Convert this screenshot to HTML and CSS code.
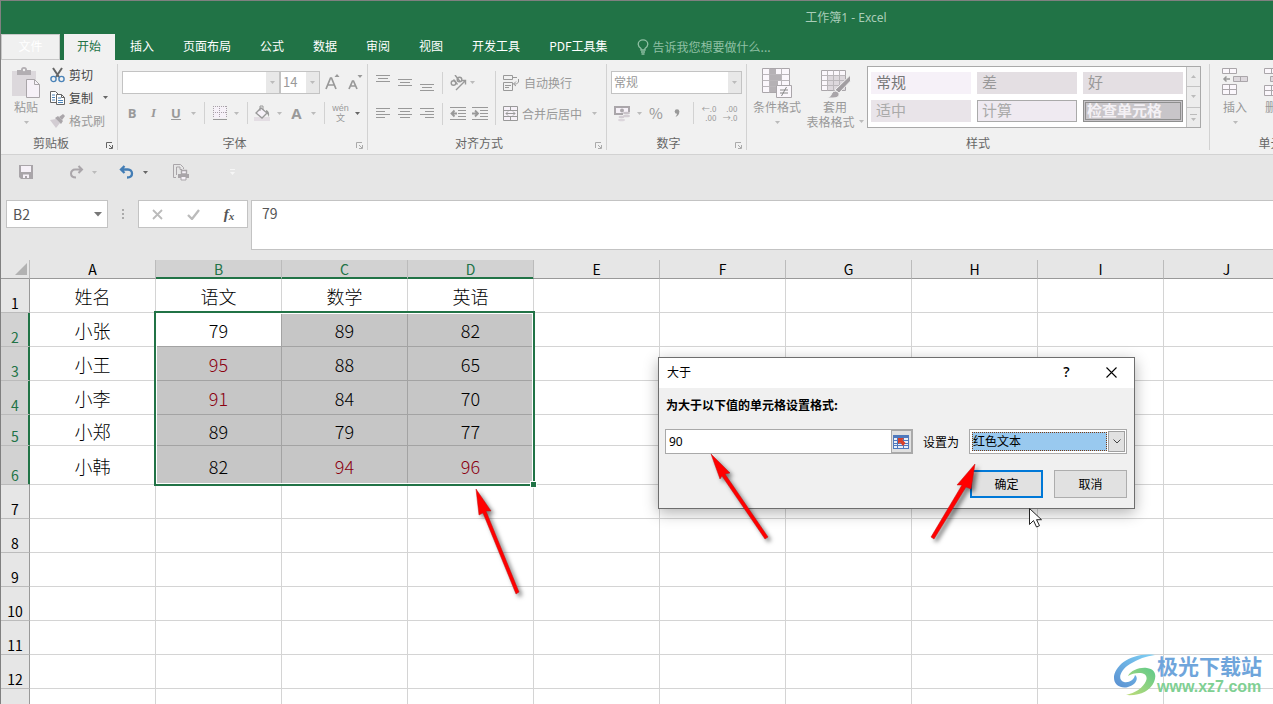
FILE: index.html
```html
<!DOCTYPE html>
<html lang="zh-CN">
<head>
<meta charset="utf-8">
<title>工作簿1 - Excel</title>
<link rel="stylesheet" href="styles.css">
</head>
<body>
<svg class="defs" width="0" height="0" aria-hidden="true">
  <symbol id="caret" viewBox="0 0 5 3"><path d="M0 0h5L2.500 3z" fill="currentColor"/></symbol>
  <symbol id="launch" viewBox="0 0 7 7"><path d="M.5 6V.5H6" fill="none" stroke="currentColor"/><path d="M3 3l3 3M6.500 3v3.500H3" fill="none" stroke="currentColor"/></symbol>
</svg>
<div class="app">
  <header class="title-bar"><span class="title">工作簿1 - Excel</span></header>

  <nav class="tabs">
    <button class="tab tab-file">文件</button>
    <button class="tab tab-active">开始</button>
    <button class="tab">插入</button>
    <button class="tab">页面布局</button>
    <button class="tab">公式</button>
    <button class="tab">数据</button>
    <button class="tab">审阅</button>
    <button class="tab">视图</button>
    <button class="tab">开发工具</button>
    <button class="tab">PDF工具集</button>
    <button class="tab tell-me"><svg width="12" height="16" viewBox="0 0 12 16" fill="none" stroke="currentColor" stroke-width="1.300"><path d="M4 11V9.500C2 8 1.200 7 1.200 5.200a4.800 4.300 0 0 1 9.600 0C10.800 7 10 8 8 9.500V11zM4 13h4M4.500 15h3"/></svg><span>告诉我您想要做什么...</span></button>
  </nav>

  <section class="ribbon">
    <div class="group clipboard">
      <div class="group-body">
        <button class="big">
          <svg width="30" height="32" viewBox="0 0 30 32"><path d="M1 4h24v25H1z" fill="#dcd8dc"/><path d="M6 3h4a3 3 0 0 1 6 0h4v5H6z" fill="#b2aeb2"/><circle cx="13" cy="3" r="1.200" fill="#f1f1f1"/><path d="M15.500 12.500h8l5 5v13h-13z" fill="#f6f1f8" stroke="#a9a5a9"/><path d="M23.500 12.500v5h5" fill="none" stroke="#a9a5a9"/></svg>
          <span>粘贴</span>
          <svg class="caret"><use href="#caret"/></svg>
        </button>
        <div class="small-list">
          <button class="small dark"><svg width="15" height="16" viewBox="0 0 15 16" fill="none"><path d="M3 1l6 9M12 1L6 10" stroke="#666" stroke-width="2"/><circle cx="3.500" cy="12" r="2.600" stroke="#4a83b8" stroke-width="1.400"/><circle cx="11.500" cy="12" r="2.600" stroke="#4a83b8" stroke-width="1.400"/></svg><span>剪切</span></button>
          <button class="small dark"><svg width="15" height="16" viewBox="0 0 15 16"><path d="M.5 1.500h5l3 3v8h-8z" fill="#fff" stroke="#666"/><path d="M6.500 4.500h5l3 3v7h-8z" fill="#fff" stroke="#666"/><path d="M2 5h3M2 7.500h3M2 10h3M8 8h3M8 10.500h5M8 12.500h5" stroke="#4a83b8"/><path d="M11.500 4.500v3h3" fill="none" stroke="#666"/></svg><span>复制</span><svg class="caret push"><use href="#caret"/></svg></button>
          <button class="small"><svg width="15" height="16" viewBox="0 0 15 16"><path d="M0 7l6-1 4 4-4 5z" fill="#d3cdd3"/><path d="M5 5l3-2 5 5-2 3z" fill="#aaa6aa"/><path d="M9 4l4-3 2 2-3 4z" fill="#aaa6aa"/></svg><span>格式刷</span></button>
        </div>
      </div>
      <footer class="group-label dark">剪贴板<svg class="launch"><use href="#launch"/></svg></footer>
    </div>

    <div class="group font">
      <div class="group-body rows">
        <div class="font-pick">
          <span class="combo"><select aria-label="字体"><option></option></select><span class="combo-arrow"><svg class="caret"><use href="#caret"/></svg></span></span>
          <span class="combo combo-size"><select aria-label="字号"><option>14</option></select><span class="combo-arrow"><svg class="caret"><use href="#caret"/></svg></span></span>
          <button class="tool" aria-label="增大字号"><svg width="15" height="16" viewBox="0 0 15 16" fill="none"><path d="M1 15L5.500 4h1L11 15M2.800 11h6.500" stroke="#999" stroke-width="1.700"/><path d="M9.500 3h5L12 0z" fill="#999"/></svg></button>
          <button class="tool" aria-label="减小字号"><svg width="15" height="16" viewBox="0 0 15 16" fill="none"><path d="M1 15l3.500-8h1L9 15M2.500 12h5" stroke="#999" stroke-width="1.700"/><path d="M9.500 1h5L12 4z" fill="#999"/></svg></button>
        </div>
        <div class="font-tools">
          <button class="tool bold">B</button><button class="tool italic">I</button><button class="tool underline">U</button>
          <svg class="caret"><use href="#caret"/></svg><i class="sep"></i>
          <button class="tool" aria-label="边框"><svg width="14" height="14" viewBox="0 0 14 14"><path d="M1 1h12v11H1z" fill="#f6f1f8"/><path d="M.5 0v12M6.500 0v12M13.500 0v12M0 .5h14M0 6.500h14" stroke="#a9a0a9" stroke-dasharray="1 1"/><path d="M0 13.500h14" stroke="#999"/></svg></button>
          <svg class="caret"><use href="#caret"/></svg><i class="sep"></i>
          <button class="tool" aria-label="填充颜色"><svg width="17" height="17" viewBox="0 0 17 17"><path d="M0 12h16v4H0z" fill="#e3dde3"/><path d="M7 3l6 5-5 5-6-5z" fill="#f6f1f8" stroke="#999" stroke-width="1.300"/><path d="M6 6V1h3v4" fill="none" stroke="#999"/><path d="M12 5q4 1 3 7-1-3-3-4z" fill="#999"/></svg></button>
          <svg class="caret"><use href="#caret"/></svg>
          <button class="tool bold big-a">A</button>
          <svg class="caret"><use href="#caret"/></svg><i class="sep"></i>
          <button class="tool pinyin"><span>wén</span><span>文</span></button>
          <svg class="caret dark"><use href="#caret"/></svg>
        </div>
      </div>
      <footer class="group-label">字体<svg class="launch"><use href="#launch"/></svg></footer>
    </div>

    <div class="group align">
      <div class="group-body align-tools">
        <button class="tool" aria-label="顶端对齐"><svg width="14" height="16" viewBox="0 0 14 16"><path d="M0 .5h14M2 3.500h10M0 6.500h14" stroke="#999"/></svg></button>
        <button class="tool" aria-label="垂直居中"><svg width="14" height="16" viewBox="0 0 14 16"><path d="M0 4.500h14M2 7.500h10M0 10.500h14" stroke="#999"/></svg></button>
        <button class="tool" aria-label="底端对齐"><svg width="14" height="16" viewBox="0 0 14 16"><path d="M0 9.500h14M2 12.500h10M0 15.500h14" stroke="#999"/></svg></button>
        <i class="sep"></i>
        <button class="tool" aria-label="方向"><svg width="17" height="16" viewBox="0 0 17 16" fill="none" stroke="#999" stroke-width="1.400"><circle cx="3.500" cy="8" r="2.300"/><path d="M3.500 4.500l4 5M5 0l5 6.500"/><circle cx="9.500" cy="4.500" r="2.300"/><path d="M6 15l9-9M11.500 5.500h4v4"/></svg></button>
        <svg class="caret at-start"><use href="#caret"/></svg>
        <i class="sep tall"></i>
        <button class="small"><svg width="17" height="16" viewBox="0 0 17 16" fill="none" stroke="#999"><path d="M.5 .5h9v4h-9zM.5 7.500h9v8h-9zM2 10.500h6M2 12.500h4M9 2.500h5M15.500 4v3l-2 2h-3M13 6.500l-2.500 2.500 2.500 2"/></svg><span>自动换行</span></button>
        <button class="tool" aria-label="左对齐"><svg width="14" height="12" viewBox="0 0 14 12"><path d="M0 .5h14M0 3.500h9M0 6.500h14M0 9.500h9" stroke="#999"/></svg></button>
        <button class="tool" aria-label="居中"><svg width="14" height="12" viewBox="0 0 14 12"><path d="M0 .5h14M2 3.500h10M0 6.500h14M2 9.500h10" stroke="#999"/></svg></button>
        <button class="tool" aria-label="右对齐"><svg width="14" height="12" viewBox="0 0 14 12"><path d="M0 .5h14M5 3.500h9M0 6.500h14M5 9.500h9" stroke="#999"/></svg></button>
        <i class="sep"></i>
        <button class="tool" aria-label="减少缩进"><svg width="17" height="14" viewBox="0 0 17 14"><path d="M0 .5h16M8 3.500h8M8 6.500h8M8 9.500h8M0 12.500h16" stroke="#999"/><path d="M7 6.500H2M4.500 3.500l-3 3 3 3" stroke="#999" stroke-width="1.800" fill="none"/></svg></button>
        <button class="tool" aria-label="增加缩进"><svg width="17" height="14" viewBox="0 0 17 14"><path d="M0 .5h16M8 3.500h8M8 6.500h8M8 9.500h8M0 12.500h16" stroke="#999"/><path d="M0 6.500h5M3 3.500l3 3-3 3" stroke="#999" stroke-width="1.800" fill="none"/></svg></button>
        <button class="small"><svg width="15" height="16" viewBox="0 0 15 16" fill="#f6f1f8" stroke="#999"><path d="M.5 .5h14v14H.5zM.5 4.500h14M.5 10.500h14M7.500 .5v4M7.500 10.500v4"/><path d="M3 7.500h9M5 5.500l-2 2 2 2M10 5.500l2 2-2 2" fill="none"/></svg><span>合并后居中</span><svg class="caret push"><use href="#caret"/></svg></button>
      </div>
      <footer class="group-label">对齐方式<svg class="launch"><use href="#launch"/></svg></footer>
    </div>

    <div class="group number">
      <div class="group-body rows">
        <span class="combo"><select aria-label="数字格式"><option>常规</option></select><span class="combo-arrow"><svg class="caret"><use href="#caret"/></svg></span></span>
        <div class="number-tools">
          <button class="tool" aria-label="会计数字格式"><svg width="17" height="17" viewBox="0 0 17 17"><path d="M1 2h14v7H1z" fill="#f6f1f8" stroke="#aaa6aa" stroke-width="2"/><circle cx="8" cy="5.500" r="2" fill="#aaa6aa"/><path d="M9 7h8v10H4v-7h5z" fill="#f1f1f1"/><ellipse cx="12.500" cy="8" rx="3.500" ry="1.300" fill="#c9c3c9"/><ellipse cx="12.500" cy="11" rx="3.500" ry="1.300" fill="#d3cdd3"/><ellipse cx="7.500" cy="12" rx="3" ry="1.200" fill="#d3cdd3"/><ellipse cx="7.500" cy="15" rx="3.500" ry="1.300" fill="#dcd6dc"/></svg></button>
          <svg class="caret"><use href="#caret"/></svg>
          <button class="tool percent">%</button>
          <button class="tool" aria-label="千位分隔"><svg width="6" height="9" viewBox="0 0 6 9"><circle cx="3" cy="2.500" r="2.300" fill="#999"/><path d="M5.300 2.500Q5.500 6 1.500 8q2-3 1.500-4z" fill="#999"/></svg></button>
          <i class="sep"></i>
          <button class="tool decimals"><span>←.0</span><span>.00</span></button>
          <button class="tool decimals"><span>.00</span><span>→.0</span></button>
        </div>
      </div>
      <footer class="group-label">数字<svg class="launch"><use href="#launch"/></svg></footer>
    </div>

    <div class="group styles">
      <div class="group-body">
        <button class="big">
          <svg width="32" height="32" viewBox="0 0 32 32"><path d="M1.500 1.500h27v24h-27z" fill="#fbf7fc" stroke="#aaa6aa"/><path d="M9 2h6v5H9zM9 8h11v5H9zM9 14h8v5H9zM9 20h6v5H9z" fill="#b5b1b5"/><path d="M1.500 7.500h27M1.500 13.500h27M1.500 19.500h27M8.500 1.500v24M20.500 1.500v24" fill="none" stroke="#bbb7bb"/><path d="M15.500 18.500h15v12h-15z" fill="#fbf7fc" stroke="#aaa6aa"/><path d="M19 23h8M19 26h8M25.500 20l-5 9" stroke="#888"/></svg>
          <span>条件格式</span>
          <svg class="caret"><use href="#caret"/></svg>
        </button>
        <button class="big">
          <svg width="32" height="32" viewBox="0 0 32 32"><path d="M2.500 3.500h24v20h-24z" fill="#fbf7fc" stroke="#aaa6aa"/><path d="M8 9h18v14H8z" fill="#ddd8dd"/><path d="M2.500 8.500h24M2.500 13.500h24M2.500 18.500h24M8.500 3.500v20M14.500 3.500v20M20.500 3.500v20" stroke="#bbb7bb"/><path d="M31.500 8v6L20 26l-4-3z" fill="#a29ea2" stroke="#f1f1f1"/><path d="M8 31q4-1 5-5 3-4 7 0 1 5-6 5z" fill="#aaa6aa" stroke="#f1f1f1"/></svg>
          <span>套用</span>
          <span class="with-caret">表格格式<svg class="caret"><use href="#caret"/></svg></span>
        </button>
        <div class="gallery">
          <div class="gallery-items">
            <button class="style normal">常规</button><button class="style bad">差</button><button class="style good">好</button>
            <button class="style neutral">适中</button><button class="style calc">计算</button><button class="style check">检查单元格</button>
          </div>
          <div class="gallery-scroll">
            <button aria-label="上一行"><svg class="caret flip"><use href="#caret"/></svg></button>
            <button aria-label="下一行"><svg class="caret"><use href="#caret"/></svg></button>
            <button aria-label="其他"><svg width="7" height="7" viewBox="0 0 7 7"><path d="M0 0h7v1H0zM1 4h5L3.500 7z" fill="currentColor"/></svg></button>
          </div>
        </div>
      </div>
      <footer class="group-label">样式</footer>
    </div>

    <div class="group cells">
      <div class="group-body">
        <button class="big"><svg width="28" height="32" viewBox="0 0 28 32"><path d="M1.500 1.500h14v5h-14zM8.500 1.500v5M1.500 17.500h14v10h-14zM1.500 22.500h14M8.500 17.500v10" fill="#fbf7fc" stroke="#aaa6aa"/><path d="M12.500 9.500h14v5h-14zM19.500 9.500v5" fill="#ddd8dd" stroke="#aaa6aa"/><path d="M9 12H3M5.500 9.500L3 12l2.500 2.500" fill="none" stroke="#999" stroke-width="1.500"/></svg><span>插入</span><svg class="caret"><use href="#caret"/></svg></button>
        <button class="big"><svg width="28" height="32" viewBox="0 0 28 32"><path d="M1.500 1.500h14v5h-14zM8.500 1.500v5M1.500 18.500h14v10h-14zM1.500 23.500h14M8.500 18.500v10" fill="#fbf7fc" stroke="#aaa6aa"/><path d="M7.500 9.500h14v5h-14z" fill="#ddd8dd" stroke="#aaa6aa"/></svg><span>删除</span><svg class="caret"><use href="#caret"/></svg></button>
      </div>
      <footer class="group-label">单元格</footer>
    </div>
  </section>

  <section class="quick-bar">
    <button aria-label="保存"><svg width="14" height="14" viewBox="0 0 14 14"><path d="M0 0h14v14H2l-2-2z" fill="#a9a5a9"/><path d="M2 1h10v6H2zM4 9.500h6V13H8v-2H6v2H4z" fill="#f6f1f8"/></svg></button>
    <button class="redo" aria-label="恢复"><svg width="15" height="14" viewBox="0 0 15 14" fill="none" stroke="#aaa6aa" stroke-width="2"><path d="M13 4.500H6a4 4 0 0 0-4 4q0 4 5 4M9.500 1l3.500 3.500L9.500 8"/></svg></button>
    <svg class="caret"><use href="#caret"/></svg>
    <button class="undo" aria-label="撤消"><svg width="15" height="14" viewBox="0 0 15 14" fill="none" stroke="#437db5" stroke-width="2.300"><path d="M2 4.500h7a4 4 0 0 1 4 4q0 4-5 4M5.500 1L2 4.500 5.500 8"/></svg></button>
    <svg class="caret dark"><use href="#caret"/></svg>
    <button class="print" aria-label="打印预览"><svg width="17" height="17" viewBox="0 0 17 17" fill="none" stroke="#a9a5a9"><path d="M3 13.500H.5V.500h7l3 3V5M3.500 11V3H7v2.500h2"/><path d="M8.500 6.500h5V10h-5z" fill="#f6f1f8" stroke-width="1.400"/><path d="M5 10h11v4H5z" fill="#a9a5a9" stroke="none"/><path d="M8 12.500h5v3.500H8z" fill="#f6f1f8"/></svg></button>
    <button class="more" aria-label="自定义"><svg width="7" height="7" viewBox="0 0 7 7"><path d="M1 0h5v1H1zM1 3h5L3.500 6z" fill="#f6f6f6"/></svg></button>
  </section>

  <section class="formula-row">
    <label class="name-box"><input value="B2" aria-label="名称框"><svg width="8" height="5" viewBox="0 0 8 5"><path d="M0 0h8L4 4.500z" fill="#777"/></svg></label>
    <svg class="grip" width="2" height="12" viewBox="0 0 2 12"><path d="M0 1h2v2H0zM0 5h2v2H0zM0 9h2v2H0z" fill="#aaa"/></svg>
    <div class="formula-buttons">
      <button aria-label="取消输入"><svg width="11" height="11" viewBox="0 0 11 11"><path d="M1 1l9 9M10 1l-9 9" stroke="#bbb" stroke-width="1.800"/></svg></button>
      <button aria-label="输入"><svg width="13" height="11" viewBox="0 0 13 11"><path d="M1 6l4 4 7-9" fill="none" stroke="#bbb" stroke-width="2.300"/></svg></button>
      <button class="fx">f<small>x</small></button>
    </div>
    <textarea class="formula" aria-label="编辑栏">79</textarea>
  </section>

  <main class="sheet">
    <table class="cells-table">
      <colgroup><col class="col-head"><col><col><col><col><col><col><col><col><col><col></colgroup>
      <thead><tr><th class="corner"><svg width="12" height="12" viewBox="0 0 12 12"><path d="M12 0v12H0z" fill="#b2b2b2"/></svg></th><th>A</th><th class="on">B</th><th class="on">C</th><th class="on">D</th><th>E</th><th>F</th><th>G</th><th>H</th><th>I</th><th>J</th></tr></thead>
      <tbody>
        <tr><th>1</th><td>姓名</td><td>语文</td><td>数学</td><td>英语</td><td></td><td></td><td></td><td></td><td></td><td></td></tr>
        <tr><th class="on">2</th><td>小张</td><td class="active">79</td><td class="sel">89</td><td class="sel">82</td><td></td><td></td><td></td><td></td><td></td><td></td></tr>
        <tr><th class="on">3</th><td>小王</td><td class="sel hot">95</td><td class="sel">88</td><td class="sel">65</td><td></td><td></td><td></td><td></td><td></td><td></td></tr>
        <tr><th class="on">4</th><td>小李</td><td class="sel hot">91</td><td class="sel">84</td><td class="sel">70</td><td></td><td></td><td></td><td></td><td></td><td></td></tr>
        <tr class="short"><th class="on">5</th><td>小郑</td><td class="sel">89</td><td class="sel">79</td><td class="sel">77</td><td></td><td></td><td></td><td></td><td></td><td></td></tr>
        <tr class="high"><th class="on">6</th><td>小韩</td><td class="sel">82</td><td class="sel hot">94</td><td class="sel hot">96</td><td></td><td></td><td></td><td></td><td></td><td></td></tr>
        <tr><th>7</th><td></td><td></td><td></td><td></td><td></td><td></td><td></td><td></td><td></td><td></td></tr>
        <tr><th>8</th><td></td><td></td><td></td><td></td><td></td><td></td><td></td><td></td><td></td><td></td></tr>
        <tr><th>9</th><td></td><td></td><td></td><td></td><td></td><td></td><td></td><td></td><td></td><td></td></tr>
        <tr><th>10</th><td></td><td></td><td></td><td></td><td></td><td></td><td></td><td></td><td></td><td></td></tr>
        <tr><th>11</th><td></td><td></td><td></td><td></td><td></td><td></td><td></td><td></td><td></td><td></td></tr>
        <tr><th>12</th><td></td><td></td><td></td><td></td><td></td><td></td><td></td><td></td><td></td><td></td></tr>
        <tr><th></th><td></td><td></td><td></td><td></td><td></td><td></td><td></td><td></td><td></td><td></td></tr>
      </tbody>
    </table>
    <div class="selection"><i class="handle"></i></div>
  </main>
</div>

<form class="dialog" role="dialog" aria-label="大于">
  <header class="dialog-title"><span>大于</span>
    <button type="button" class="help">?</button>
    <button type="button" aria-label="关闭"><svg width="11" height="11" viewBox="0 0 11 11"><path d="M.5 .5l10 10M10.500 .5l-10 10" stroke="#000" stroke-width="1.100"/></svg></button>
  </header>
  <div class="dialog-body">
    <label class="prompt" for="limit">为大于以下值的单元格设置格式:</label>
    <div class="fields">
      <div class="limit-box"><input id="limit" value="90"><button type="button" aria-label="选择区域"><svg width="16" height="14" viewBox="0 0 16 14"><path d="M0 0h16v14H0z" fill="#4f79bd"/><path d="M1 3h3v2H1zM1 6h3v2H1zM1 9h3v1H1zM1 11h3v2H1zM5 3h5v2H5zM5 6h5v2H5zM5 9h5v1H5zM5 11h5v2H5zM11 3h4v2h-4zM11 6h4v2h-4zM11 9h4v1h-4zM11 11h4v2h-4z" fill="#e8effa"/><path d="M5 3h6L9.500 5l3 3-2.500 3-3-3.500L5 9z" fill="#d8402a"/></svg></button></div>
      <label for="format">设置为</label>
      <div class="format-box"><select id="format"><option>红色文本</option></select><span><svg width="8" height="5" viewBox="0 0 8 5"><path d="M.5 .5L4 4 7.500 .5" fill="none" stroke="#444"/></svg></span></div>
    </div>
    <div class="actions"><button type="button" class="ok">确定</button><button type="button">取消</button></div>
  </div>
</form>

<svg class="callouts" width="1273" height="704" viewBox="0 0 1273 704" aria-hidden="true">
  <g class="red-arrows">
    <path d="M711 454L730 473 725 474 768 537 765 539 722 476 720 479z"/>
    <path d="M975 464L971 489 966 487 934 539 931 537 962 485 957 485z"/>
    <path d="M476 489L491 511 486 511 519 592 516 594 483 513 479 515z"/>
  </g>
  <path d="M1029.500 508.500v16l4-4 3 6.500 3-1.300-3-6h5z" fill="#fff" stroke="#222"/>
</svg>

<div class="watermark">
  <svg width="42" height="42" viewBox="0 0 42 42"><defs><linearGradient id="blue" x1="1" y1="0" x2="0" y2="1"><stop offset="0" stop-color="#7fd2f6"/><stop offset="1" stop-color="#5a8fd0"/></linearGradient><linearGradient id="green" x1="1" y1="0" x2="0" y2="1"><stop offset="0" stop-color="#5cc98a"/><stop offset="1" stop-color="#c0dc78"/></linearGradient></defs><path d="M41 1C17-2 0 12 0 24c0 7 7 11 14 9 8-2 11-9 7-12-1 5-6 8-11 7-7-2-4-12 6-18 8-5 16-8 25-9z" fill="url(#blue)"/><path d="M14 22c3-6 12-9 19-8 8 1 10 7 7 14-4 9-14 14-28 13 9-2 17-7 20-14 2-5-1-8-7-8-4 0-8 1-11 3z" fill="url(#green)"/></svg>
  <div><strong>极光下载站</strong><a href="#">www.xz7.com</a></div>
</div>
</body>
</html>
```
FILE: styles.css
```css
* { box-sizing: border-box; }

body {
  margin: 0;
  height: 100vh;
  overflow: hidden;
  position: relative;
  font: 12px/16px "Noto Sans CJK SC", sans-serif;
  color: #999;
  background: #e6e6e6;
}

button, input, select, textarea {
  font: inherit;
  color: inherit;
  margin: 0;
  padding: 0;
  border: 0;
  border-radius: 0;
  background: none;
  outline: none;
  appearance: none;
}

button { white-space: nowrap; }
svg { display: block; flex: none; }
.defs { position: absolute; }

.app {
  height: 100vh;
  overflow: hidden;
  border: 1px solid #808080;
  border-width: 1px 0 0 1px;
  display: flex;
  flex-direction: column;
}

/* Title and tabs */
.title-bar {
  flex: none;
  display: flex;
  align-items: center;
  justify-content: center;
  height: 33px;
  padding-left: 418px;
  background: #217346;
  color: #a9cdb8;
}
.title { font-family: "Noto Sans", "Noto Sans CJK SC", sans-serif; }

.tabs {
  flex: none;
  display: flex;
  gap: 1px;
  height: 26px;
  background: #217346;
  color: #fff;
}

.tab { padding: 0 14px 3px; }
.tab-file {
  width: 59px;
  margin-right: 3px;
  border: 1px solid #c8c8c8;
  background: #f0f0f0;
  color: #fff;
}
.tab-active { padding-left: 13px; background: #f1f1f1; color: #217346; }
.tell-me {
  display: flex;
  align-items: center;
  gap: 4px;
  padding-bottom: 0;
  color: #8fc0a4;
}

/* Ribbon */
.ribbon {
  flex: none;
  display: flex;
  height: 95px;
  padding: 4px 0;
  background: #f1f1f1;
  border-bottom: 1px solid #d2d2d2;
}

.group {
  flex: none;
  display: flex;
  flex-direction: column;
  border-right: 1px solid #d2d2d2;
}
.clipboard { width: 117px; }
.font { width: 250px; }
.align { width: 239px; }
.number { width: 140px; }
.styles { width: 463px; }
.cells { width: 134px; }

.group-body { flex: 1; display: flex; padding: 0 4px; }
.rows { flex-direction: column; padding-top: 7px; gap: 8px; }

.group-label {
  display: flex;
  justify-content: center;
  align-items: center;
  position: relative;
  height: 15px;
  padding-right: 16px;
  color: #666;
}
.styles .group-label, .cells .group-label { padding-right: 0; }
.launch {
  position: absolute;
  right: 4px;
  bottom: 1px;
  width: 7px;
  height: 7px;
  color: #aaa;
}
.clipboard .launch { color: #666; }

.caret { width: 5px; height: 3px; color: #bbb; }
.caret.dark, .dark .caret { color: #666; }
.caret.push { margin-left: 6px; }
.flip { transform: rotate(180deg); }

.big {
  flex: none;
  display: flex;
  flex-direction: column;
  align-items: center;
  padding-top: 3px;
}
.big > .caret { margin-top: 7px; }
.big span { line-height: 15px; }
.with-caret { display: flex; align-items: center; gap: 4px; }
.clipboard .big { width: 42px; }
.small-list { display: flex; flex-direction: column; justify-content: flex-start; padding: 0 3px; }
.small { display: flex; align-items: center; gap: 4px; height: 22px; }
.small-list .small { padding-bottom: 2px; height: 23px; }
.small.dark { color: #444; }

.tool {
  display: flex;
  align-items: center;
  justify-content: center;
  height: 22px;
}
.sep { width: 1px; height: 22px; background: #d2d2d2; }

.combo {
  display: flex;
  height: 23px;
  border: 1px solid #c3c3c3;
  background: #fff;
}
.combo select { flex: 1; min-width: 0; padding-left: 2px; padding-bottom: 1px; }
.combo-size select { font-size: 13px; }
.combo-arrow {
  display: flex;
  align-items: center;
  justify-content: center;
  width: 13px;
  background: #e8e8e8;
}

.font-pick { display: grid; grid-template-columns: 158px 40px 24px 22px; }
.font-tools {
  display: grid;
  grid-template-columns: 20px 23px 22px 12px 10px 21px 12px 10px 21px 12px 23px 11px 10px 23px 11px;
  align-items: center;
  justify-items: center;
}
.bold { font: 700 13px/16px "Open Sans", sans-serif; }
.italic { font: italic 700 13px/16px "Liberation Serif", serif; }
.underline { font: 700 13px/16px "Open Sans", sans-serif; text-decoration: underline; }
.big-a { font-size: 15px; }
.pinyin { flex-direction: column; font-size: 9px; line-height: 10px; }
.pinyin span:first-child { font-family: "Liberation Sans", sans-serif; }

.align-tools {
  display: grid;
  grid-template-columns: 22px 22px 22px 8px 24px 20px 10px 1fr;
  grid-template-rows: 23px 23px;
  row-gap: 8px;
  padding-top: 7px;
  align-items: center;
  justify-items: center;
}
.align-tools .small { justify-self: start; padding-left: 3px; }
.align-tools .at-start { justify-self: start; }
.tall { grid-row: 1 / 3; grid-column: 7; height: 54px; }

.number .combo { width: 131px; }
.number-tools {
  display: grid;
  grid-template-columns: 22px 12px 22px 20px 12px 20px 22px;
  align-items: center;
  justify-items: center;
}
.percent { font-size: 15px; }
.decimals { flex-direction: column; align-items: flex-end; font-size: 8px; line-height: 9px; }

.styles .group-body { padding: 0; padding-left: 2px; }
.styles .big { width: 56px; }
.styles .big + .big { width: 60px; }
.gallery {
  display: flex;
  height: 62px;
  margin: 2px;
  border: 1px solid #a9a9a9;
  background: #fff;
}
.gallery-items {
  display: grid;
  grid-template-columns: 100px 100px 100px;
  grid-template-rows: 22px 22px;
  gap: 6px;
  padding: 5px 3px;
}
.style {
  padding: 0 5px 2px;
  text-align: left;
  font-size: 15px;
  line-height: 18px;
  background: #e4dfe3;
}
.normal { background: #f6f1f8; color: #777; }
.neutral { background: #e9e4e9; color: #aaa; }
.calc { background: #efeaf1; border: 1px solid #aaa; padding: 0 4px 2px; color: #aaa; }
.check {
  border: 3px double #8e8e8e;
  padding: 0 1px 2px;
  font-weight: 700;
  line-height: 14px;
  background: #c8c5c9;
  color: #f4f1f5;
}
.gallery-scroll { display: flex; flex-direction: column; width: 14px; border-left: 1px solid #c3c3c3; }
.gallery-scroll button {
  flex: 1;
  display: flex;
  align-items: center;
  justify-content: center;
  background: #ececec;
  color: #bbb;
}
.gallery-scroll button + button { border-top: 1px solid #c3c3c3; }

.cells .group-body { gap: 4px; padding: 0 6px; }
.cells .big { width: 38px; }

/* Quick access bar */
.quick-bar {
  flex: none;
  display: flex;
  align-items: center;
  height: 34px;
  padding-left: 18px;
}
.redo { margin-left: 36px; margin-right: 8px; }
.undo { margin-left: 22px; margin-right: 9px; }
.print { margin-left: 25px; }
.more { margin-left: 39px; }

/* Formula row */
.formula-row {
  flex: none;
  display: flex;
  align-items: flex-start;
  height: 71px;
  padding: 11px 0 0 5px;
  font-size: 14px;
  color: #555;
}
.name-box {
  display: flex;
  align-items: center;
  width: 102px;
  height: 28px;
  padding: 0 5px 0 6px;
  border: 1px solid #c3c3c3;
  background: #fff;
}
.name-box input { flex: 1; min-width: 0; padding-bottom: 1px; }
.grip { margin: 8px 14px; }
.formula-buttons {
  display: grid;
  grid-template-columns: 1fr 1fr 1fr;
  width: 110px;
  height: 28px;
  margin-right: 3px;
  border: 1px solid #c3c3c3;
  background: #fff;
}
.formula-buttons button { display: flex; align-items: center; justify-content: center; }
.formula-buttons .fx { font: italic 700 15px/16px "Liberation Serif", serif; }
.fx small { font-size: 11px; padding-top: 4px; }
.formula {
  flex: 1;
  height: 50px;
  padding: 4px 10px;
  border: 1px solid #c3c3c3;
  border-right: 0;
  background: #fff;
  resize: none;
}

/* Sheet */
.sheet { flex: 1; min-height: 0; position: relative; overflow: hidden; }
.cells-table {
  table-layout: fixed;
  width: 1289px;
  border-collapse: separate;
  border-spacing: 0;
  background: #fff;
  color: #000;
}
.col-head { width: 29px; }
.cells-table th, .cells-table td {
  height: 34px;
  padding: 0;
  border: 1px solid #d4d4d4;
  border-width: 0 1px 1px 0;
  text-align: center;
  overflow: hidden;
}
.cells-table td { font-size: 18px; line-height: 24px; font-weight: 300; padding-top: 1px; }
.cells-table th {
  background: #e6e6e6;
  font-size: 14px;
  line-height: 16px;
  font-weight: 400;
}
.cells-table thead th {
  height: 19px;
  border-bottom-color: #999;
  border-right-color: #bbb;
}
.cells-table tbody th { vertical-align: bottom; padding-bottom: 1px; border-color: #bbb; border-right-color: #999; }
.cells-table thead .on { background: #d2d2d2; color: #217346; box-shadow: inset 0 -1px #217346; border-bottom-color: #217346; }
.cells-table tbody .on { background: #d2d2d2; color: #217346; box-shadow: inset -1px 0 #217346; border-right-color: #217346; }
.cells-table .short td, .cells-table .short th { height: 31px; }
.cells-table .high td, .cells-table .high th { height: 39px; }
.cells-table .corner svg { margin-left: 14px; }
.cells-table .sel { background: #c6c6c6; border-color: #a3a3a3; }
.cells-table .active { border-color: #a3a3a3; }
.cells-table .hot { color: #8b0010; }

.selection {
  position: absolute;
  left: 153px;
  top: 51px;
  width: 381px;
  height: 175px;
  border: 2px solid #217346;
  box-shadow: inset 0 0 0 1px #fff;
}
.handle {
  position: absolute;
  right: -4px;
  bottom: -4px;
  width: 7px;
  height: 7px;
  border: 1px solid #fff;
  background: #217346;
}

/* Dialog */
.dialog {
  position: absolute;
  left: 658px;
  top: 357px;
  width: 477px;
  border: 1px solid #6e6e6e;
  background: #f0f0f0;
  color: #000;
  box-shadow: 0 4px 14px rgba(0, 0, 0, .3);
}
.dialog-title {
  display: flex;
  align-items: center;
  height: 30px;
  padding: 0 0 2px 8px;
  background: #fff;
}
.dialog-title span { flex: 1; }
.dialog-title button { display: flex; justify-content: center; width: 45px; }
.help { font-family: "Open Sans", sans-serif; font-size: 14px; font-weight: 600; }
.dialog-body { padding: 9px 7px 10px; padding-left: 6px; }
.prompt { display: block; padding-left: 1px; font-weight: 700; }
.fields { display: flex; align-items: center; margin: 16px 0; }
.limit-box {
  display: flex;
  flex: 1;
  height: 25px;
  border: 1px solid #a9a9a9;
  background: #fff;
}
.limit-box input { flex: 1; min-width: 0; padding-left: 3px; font-family: "Noto Sans", sans-serif; }
.limit-box button {
  display: flex;
  align-items: center;
  justify-content: center;
  width: 21px;
  border: 1px solid #a9a9a9;
  background: #e1e1e1;
}
.fields > label { padding: 0 10px; }
.format-box {
  display: flex;
  width: 158px;
  height: 25px;
  padding: 1px;
  border: 1px solid #a9a9a9;
  background: #fff;
}
.format-box select {
  flex: 1;
  min-width: 0;
  margin: 1px;
  padding-bottom: 2px;
  border: 1px dotted #7a3b12;
  background: #99c9ef;
}
.format-box span {
  display: flex;
  align-items: center;
  justify-content: center;
  width: 17px;
  border: 1px solid #a0a0a0;
  background: #e1e1e1;
}
.actions { display: flex; justify-content: flex-end; gap: 11px; }
.actions button {
  width: 73px;
  height: 28px;
  border: 1px solid #adadad;
  background: #e1e1e1;
}
.actions .ok { border: 2px solid #0078d7; }

.callouts { position: absolute; left: 0; top: 0; pointer-events: none; }
.red-arrows { fill: #f00; stroke: #c01010; stroke-width: .5px; filter: drop-shadow(3px 3px 2px rgba(0, 0, 0, .5)); }

.watermark {
  position: absolute;
  right: 11px;
  bottom: 7px;
  display: flex;
  align-items: center;
  gap: 1px;
}
.watermark div { display: flex; flex-direction: column; }
.watermark strong { font-size: 21px; line-height: 24px; color: #6fa5db; }
.watermark a {
  font: 700 16px/20px "Liberation Sans", sans-serif;
  color: #7fd093;
  text-decoration: none;
}
```
